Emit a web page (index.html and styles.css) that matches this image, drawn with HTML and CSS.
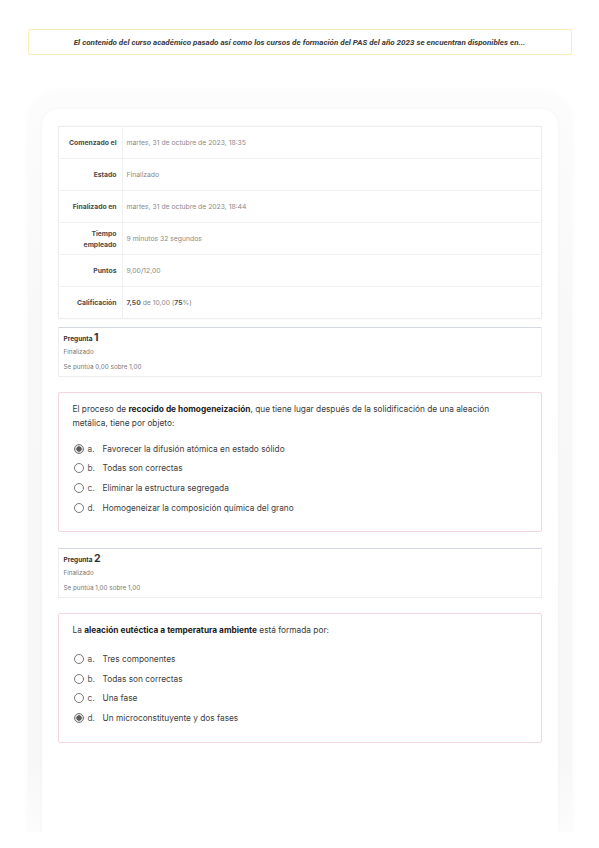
FILE: index.html
```html
<!DOCTYPE html>
<html lang="es">
<head>
<meta charset="utf-8">
<title>Revisión del intento</title>
<link rel="stylesheet" href="styles.css">
</head>
<body>
<div class="page">
  <div class="notice">El contenido del curso académico pasado así como los cursos de formación del PAS del año 2023 se encuentran disponibles en...</div>

  <div class="outer">
    <div class="card">
      <table class="summary">
        <tr><th>Comenzado el</th><td>martes, 31 de octubre de 2023, 18:35</td></tr>
        <tr><th>Estado</th><td>Finalizado</td></tr>
        <tr><th>Finalizado en</th><td>martes, 31 de octubre de 2023, 18:44</td></tr>
        <tr><th>Tiempo empleado</th><td>9 minutos 32 segundos</td></tr>
        <tr><th>Puntos</th><td>9,00/12,00</td></tr>
        <tr><th>Calificación</th><td><b>7,50</b> de 10,00 (<b>75</b>%)</td></tr>
      </table>

      <div class="qinfo">
        <div class="qno">Pregunta <span class="num">1</span></div>
        <div class="state">Finalizado</div>
        <div class="grade">Se puntúa 0,00 sobre 1,00</div>
      </div>
      <div class="qbox">
        <p class="qtext">El proceso de <b>recocido de homogeneización</b>, que tiene lugar después de la solidificación de una aleación metálica, tiene por objeto:</p>
        <div class="answers">
          <div class="opt"><span class="radio checked"></span><span class="letter">a.</span>Favorecer la difusión atómica en estado sólido</div>
          <div class="opt"><span class="radio"></span><span class="letter">b.</span>Todas son correctas</div>
          <div class="opt"><span class="radio"></span><span class="letter">c.</span>Eliminar la estructura segregada</div>
          <div class="opt"><span class="radio"></span><span class="letter">d.</span>Homogeneizar la composición química del grano</div>
        </div>
      </div>

      <div class="qinfo">
        <div class="qno">Pregunta <span class="num">2</span></div>
        <div class="state">Finalizado</div>
        <div class="grade">Se puntúa 1,00 sobre 1,00</div>
      </div>
      <div class="qbox">
        <p class="qtext">La <b>aleación eutéctica a temperatura ambiente</b> está formada por:</p>
        <div class="answers wide">
          <div class="opt"><span class="radio"></span><span class="letter">a.</span>Tres componentes</div>
          <div class="opt"><span class="radio"></span><span class="letter">b.</span>Todas son correctas</div>
          <div class="opt"><span class="radio"></span><span class="letter">c.</span>Una fase</div>
          <div class="opt"><span class="radio checked"></span><span class="letter">d.</span>Un microconstituyente y dos fases</div>
        </div>
      </div>
    </div>
  </div>
</div>
</body>
</html>
```

FILE: styles.css
```css
* { box-sizing: border-box; }
html, body { margin: 0; padding: 0; background: #fff; }
body { font-family: Inter, "Noto Sans", "Liberation Sans", sans-serif; color: #333; }

.page {
  width: 544px;
  margin: 0 auto;
  padding-top: 29px;
}

.notice {
  height: 26px;
  border: 1px solid #fbe9b8;
  border-radius: 2px;
  display: flex;
  align-items: center;
  justify-content: center;
  font-family: Roboto, "Liberation Sans", sans-serif;
  font-style: italic;
  font-weight: 700;
  font-size: 8px;
  color: #3a3a3a;
}

.outer {
  margin-top: 38px;
  height: 739px;
  padding: 16px 14px 0;
  background: linear-gradient(#fcfcfc, #f8f8f8 30%, #f7f7f7 90%, #fcfcfc);
  border-radius: 30px 30px 0 0;
  box-shadow: 0 0 6px 2px #fbfbfb;
}

.card {
  height: 100%;
  background: #fff;
  border-radius: 16px 16px 0 0;
  box-shadow: 0 0 4px rgba(0,0,0,0.035);
  padding: 17px 16px 0;
}

.summary {
  width: 100%;
  border-collapse: collapse;
  border: 1px solid #eceef1;
  box-shadow: 0 0 2px rgba(0,0,0,0.04);
  font-size: 6.8px;
}
.summary tr { height: 32px; border-bottom: 1px solid #eff0f2; }
.summary tr:last-child { border-bottom: none; }
.summary th {
  width: 64px;
  text-align: right;
  font-weight: 700;
  color: #4a4a4a;
  padding: 0 5px 0 8px;
  line-height: 11px;
  border-right: 1px solid #eff0f2;
}
.summary td {
  color: #8a8a8a;
  padding: 0 4px;
  font-weight: 400;
}
.summary td b { color: #555; font-weight: 700; }

.qinfo {
  margin-top: 8px;
  height: 50px;
  border: 1px solid #eceff2;
  border-top-color: #d3d8de;
  padding: 2px 5px 0;
  background: #fff;
}
.qinfo + .qbox { margin-top: 15px; }
.qbox + .qinfo { margin-top: 16px; }
.qno {
  height: 15px;
  line-height: 15px;
  font-size: 6.5px;
  font-weight: 700;
  color: #333;
}
.qno .num { font-size: 10.5px; }
.state, .grade {
  height: 15px;
  line-height: 15px;
  font-size: 6.3px;
  color: #777;
}

.qbox {
  border: 1px solid #f4d6dd;
  border-radius: 2px;
  padding: 9px 14px 14px;
  font-size: 8.3px;
}
.qtext {
  margin: 0;
  line-height: 14px;
  color: #3a3a3a;
}
.qtext b { color: #222; font-weight: 700; }
.answers { margin-top: 9px; display: flex; flex-direction: column; }
.answers.wide { margin-top: 12px; }
.opt {
  height: 19.6px;
  display: flex;
  align-items: center;
  color: #3e3e3e;
}
.radio {
  width: 10px;
  height: 10px;
  border: 1px solid #7a7a7a;
  border-radius: 50%;
  margin-left: 1px;
  margin-right: 4px;
  background: #fff;
  flex: none;
}
.radio.checked {
  background: radial-gradient(circle, #5a5a5a 0 2.4px, #d9d9d9 2.9px);
}
.letter {
  width: 15px;
  color: #555;
}
```
